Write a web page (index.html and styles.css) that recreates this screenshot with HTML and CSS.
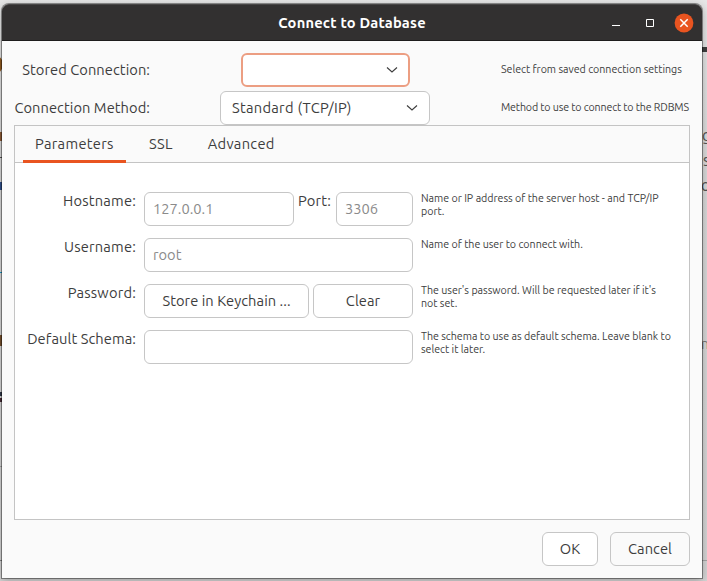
FILE: index.html
```html
<!DOCTYPE html>
<html lang="en">
<head>
<meta charset="utf-8">
<title>Connect to Database</title>
<link rel="stylesheet" href="styles.css">
</head>
<body>
<div class="backdrop" aria-hidden="true">
  <i class="scrap avatar"></i>
  <i class="scrap mark-a"></i>
  <i class="scrap mark-b"></i>
  <i class="scrap mark-c"></i>
  <i class="scrap mark-d"></i>
  <i class="scrap mark-e"></i>
  <i class="scrap mark-f"></i>
  <i class="scrap rule-l0"></i>
  <i class="scrap rule-l1"></i>
  <i class="scrap rule-l2"></i>
  <i class="scrap bar"></i>
  <i class="scrap rule-r"></i>
  <span class="scrap letter l1">g</span>
  <span class="scrap letter l2">s</span>
  <span class="scrap letter l3">o</span>
  <span class="scrap letter l4">n</span>
</div>
<main class="window">
  <header class="titlebar">
    <h1 class="title">Connect to Database</h1>
    <div class="controls">
      <svg class="control" width="20" height="20" viewBox="0 0 20 20"><path d="M6 12.5h8" stroke="#fff" fill="none"/></svg>
      <svg class="control" width="20" height="20" viewBox="0 0 20 20"><path d="M6.5 6.5h7v7h-7z" stroke="#fff" fill="none"/></svg>
      <svg class="control" width="20" height="20" viewBox="0 0 20 20"><circle cx="10" cy="10" r="9.4" fill="#e95420"/><path d="M6.3 6.3l7.4 7.4M13.7 6.3l-7.4 7.4" stroke="#fff" stroke-width="1.5" fill="none"/></svg>
    </div>
  </header>
  <section class="content">
    <div class="connection">
      <span class="label">Stored Connection:</span>
      <div class="combo focused"><span></span><svg width="12" height="8" viewBox="0 0 12 8"><path d="M1 1.5l5 4.5 5-4.5" stroke="#3d3d3d" stroke-width="1.1" fill="none"/></svg></div>
      <span class="hint">Select from saved connection settings</span>
      <span class="label">Connection Method:</span>
      <div class="combo wide"><span class="choice">Standard (TCP/IP)</span><svg width="12" height="8" viewBox="0 0 12 8"><path d="M1 1.5l5 4.5 5-4.5" stroke="#3d3d3d" stroke-width="1.1" fill="none"/></svg></div>
      <span class="hint tight">Method to use to connect to the RDBMS</span>
    </div>
    <div class="notebook">
      <nav class="tabs">
        <span class="tab active">Parameters</span>
        <span class="tab">SSL</span>
        <span class="tab">Advanced</span>
      </nav>
      <div class="form">
        <span class="label">Hostname:</span>
        <div class="fields">
          <div class="entry host">127.0.0.1</div>
          <span class="label port-label">Port:</span>
          <div class="entry port">3306</div>
        </div>
        <p class="hint">Name or IP address of the server host - and TCP/IP<br>port.</p>
        <span class="label">Username:</span>
        <div class="fields"><div class="entry fill">root</div></div>
        <p class="hint">Name of the user to connect with.</p>
        <span class="label">Password:</span>
        <div class="fields">
          <div class="button store">Store in Keychain ...</div>
          <div class="button clear">Clear</div>
        </div>
        <p class="hint">The user's password. Will be requested later if it's<br>not set.</p>
        <span class="label schema">Default Schema:</span>
        <div class="fields"><div class="entry fill"></div></div>
        <p class="hint">The schema to use as default schema. Leave blank to<br>select it later.</p>
      </div>
    </div>
    <footer class="actions">
      <div class="button ok">OK</div>
      <div class="button cancel">Cancel</div>
    </footer>
  </section>
</main>
</body>
</html>
```
FILE: styles.css
```css
* { box-sizing: border-box; }
body {
  margin: 0;
  width: 707px;
  height: 581px;
  overflow: hidden;
  padding: 4px 5px 3px 2px;
  position: relative;
  background: linear-gradient(#e6e6e6, #d8d8d8 30%, #d4d4d4);
  color: #3d3d3d;
  font: 14.667px/20px "Ubuntu", "Noto Sans", sans-serif;
}
.backdrop { position: absolute; inset: 0; overflow: hidden; }
.scrap { position: absolute; }
.avatar { left: -12px; top: 56px; width: 15px; height: 17px; border-radius: 8px; background: #8f5a20; }
.mark-a { left: 0; top: 132px; width: 2px; height: 9px; background: #8d5b36; }
.mark-b { left: 0; top: 182px; width: 2px; height: 8px; background: #304f8c; }
.mark-c { left: 0; top: 272px; width: 2px; height: 1px; background: #159acb; }
.mark-d { left: 0; top: 335px; width: 2px; height: 11px; background: #74502d; }
.mark-e { left: 0; top: 392px; width: 2px; height: 4px; background: #303848; }
.mark-f { left: 0; top: 398px; width: 2px; height: 4px; background: #472b35; }
.rule-l0 { left: 0; top: 157px; width: 2px; height: 1px; background: #555; }
.rule-l1 { left: 0; top: 466px; width: 2px; height: 1px; background: #a6a6a6; }
.rule-l2 { left: 0; top: 560px; width: 2px; height: 1px; background: #858585; }
.bar { right: 0; top: 47px; width: 5px; height: 5px; background: #3e3e3e; }
.rule-r { right: 0; top: 560px; width: 5px; height: 1px; background: #a6a6a6; }
.letter { left: 702px; font-size: 16px; color: #555; }
.l1 { top: 125px; }
.l2 { top: 150px; left: 703px; }
.l3 { top: 175px; left: 701px; }
.l4 { top: 334px; left: 701px; font-size: 14px; color: #777; }
.window {
  position: relative;
  width: 700px;
  height: 574px;
  display: flex;
  flex-direction: column;
  background: #fafafa;
  border-radius: 7px 7px 0 0;
  box-shadow: 0 0 0 1px rgba(0,0,0,.38), 0 2px 8px rgba(0,0,0,.3);
}
.titlebar {
  height: 37px;
  flex: none;
  display: grid;
  grid-template-columns: 1fr auto 1fr;
  align-items: center;
  padding-right: 8px;
  background: #323030;
  border-top: 1px solid #484646;
  border-bottom: 1px solid #1d1c1c;
  border-radius: 7px 7px 0 0;
}
.title { grid-column: 2; margin: 0 -8px 0 0; font-size: 14.667px; line-height: 20px; font-weight: 700; letter-spacing: .2px; color: #fff; }
.controls { display: flex; justify-content: flex-end; gap: 14px; }
.control { display: block; }
.content { flex: 1; padding: 12px; display: flex; flex-direction: column; }
.connection {
  display: grid;
  grid-template-columns: 136px 350px 1fr;
  grid-auto-rows: 34px;
  row-gap: 4px;
  align-items: center;
}
.label { text-align: right; white-space: nowrap; letter-spacing: .06px; }
.hint { margin: 0; font-size: 10.667px; line-height: 13px; white-space: nowrap; letter-spacing: -.02px; }
.tight { letter-spacing: -.14px; }
.connection .hint { padding: 0 0 2px 1px; }
.combo {
  justify-self: center;
  width: 169px;
  height: 34px;
  padding: 0 11px;
  display: flex;
  align-items: center;
  justify-content: space-between;
  border: 1px solid #c6c6c6;
  border-radius: 6px;
  background: #fff;
}
.choice { letter-spacing: .28px; }
.focused { border: 2px solid #ec9e82; padding: 0 10px; }
.wide { width: 210px; }
.notebook { height: 395px; border: 1px solid #c4c4c4; background: #fff; }
.tabs { height: 37px; display: flex; padding-left: 8px; background: #fafafa; border-bottom: 1px solid #c4c4c4; }
.tab { height: 37px; padding: 8px 12px 0; margin-right: 11px; letter-spacing: .3px; }
.active { width: 103px; border-bottom: 3px solid #e95420; }
.form {
  display: grid;
  grid-template-columns: 121px 269px 1fr;
  column-gap: 8px;
  row-gap: 12px;
  grid-auto-rows: 34px;
  padding-top: 29px;
}
.form .label { line-height: 18px; letter-spacing: .2px; }
.form .schema { letter-spacing: .08px; }
.fields { display: flex; }
.entry, .button { height: 34px; line-height: 32px; border: 1px solid #c6c6c6; border-radius: 6px; background: #fff; white-space: nowrap; }
.entry { padding-left: 8px; color: #8b8b8b; }
.button { text-align: center; letter-spacing: .06px; }
.host { width: 150px; }
.port-label { width: 42px; padding-left: 4px; text-align: left !important; }
.port { width: 77px; }
.fill { width: 269px; }
.store { width: 165px; margin-right: 4px; }
.clear { width: 100px; }
.actions { display: flex; justify-content: flex-end; gap: 12px; padding-top: 12px; }
.ok { width: 56px; }
.cancel { width: 80px; background: #fafafa; }
```
